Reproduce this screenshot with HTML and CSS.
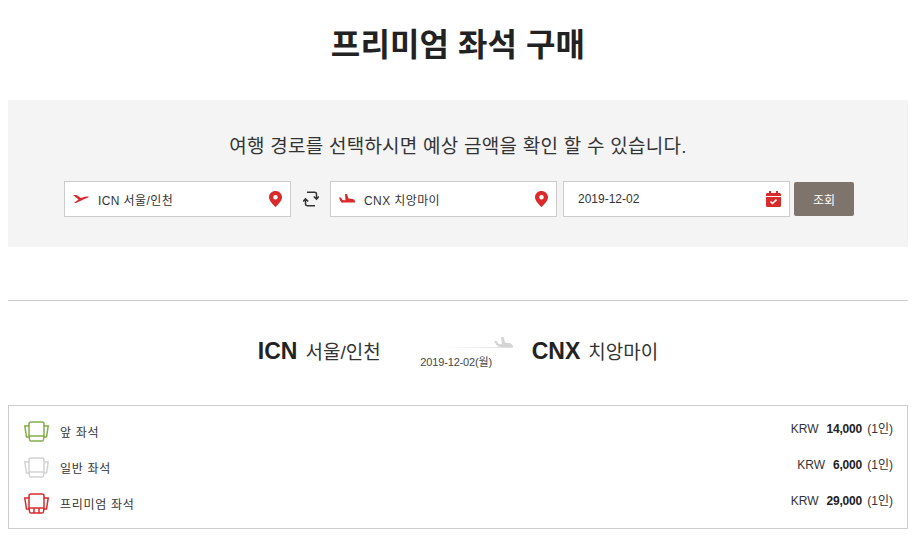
FILE: index.html
```html
<!DOCTYPE html>
<html lang="ko">
<head>
  <meta charset="UTF-8">
  <title>프리미엄 좌석 구매</title>
  <link rel="stylesheet" href="styles.css">
</head>
<body>

<h1 class="title">프리미엄 좌석 구매</h1>

<div class="search">
  <p class="search-text">여행 경로를 선택하시면 예상 금액을 확인 할 수 있습니다.</p>
  <div class="search-row">
    <div class="field">
      <svg class="plane" width="16" height="10" viewBox="0 0 16 10"><path fill="#d92b2b" d="M0 1h3.500L8 4l4-1.200c1.500-.4 3-.5 4-.2-1 1.400-3 2-5 2.700L3 9H1l4.500-3.500z"/></svg>
      <span class="field-text wide">ICN 서울/인천</span>
      <svg class="pin" width="13" height="16" viewBox="0 0 13 16"><path fill="#d92b2b" fill-rule="evenodd" d="M6.500 0C3 0 0 2.700 0 6.200 0 10 4.500 14 6.500 16 8.500 14 13 10 13 6.200 13 2.700 10 0 6.500 0zm0 4a2.300 2.300 0 1 1 0 4.600 2.300 2.300 0 0 1 0-4.600z"/></svg>
    </div>
    <div class="swap">
      <svg width="16" height="16" viewBox="0 0 16 16" fill="none" stroke="#333" stroke-width="1.500"><path d="M4 1.200h7.500c1.200 0 2 .8 2 2V8M10.800 5.500l2.700 2.700 2.300-2.700M12 14.800H4.500c-1.200 0-2-.8-2-2V8M.2 10.500l2.300-2.700 2.700 2.700"/></svg>
    </div>
    <div class="field">
      <svg class="plane" width="16" height="10" viewBox="0 0 16 10"><path fill="#d92b2b" d="M6 0h2l1.500 4.500 4 .5c1 .2 2 .8 2.500 2v1.500H4C2.500 9.500 1 7 0 3.500h2L3.500 6l3 .3z"/></svg>
      <span class="field-text wide">CNX 치앙마이</span>
      <svg class="pin" width="13" height="16" viewBox="0 0 13 16"><path fill="#d92b2b" fill-rule="evenodd" d="M6.500 0C3 0 0 2.700 0 6.200 0 10 4.500 14 6.500 16 8.500 14 13 10 13 6.200 13 2.700 10 0 6.500 0zm0 4a2.300 2.300 0 1 1 0 4.600 2.300 2.300 0 0 1 0-4.600z"/></svg>
    </div>
    <div class="field date">
      <span class="field-text">2019-12-02</span>
      <svg class="cal" width="15" height="16" viewBox="0 0 15 16"><path fill="#d92b2b" d="M3 0h2v2h5V0h2v2h1.500C14.400 2 15 2.600 15 3.500V5H0V3.500C0 2.600.6 2 1.500 2H3zM0 6h15v8.500c0 .9-.6 1.500-1.500 1.500h-12C.6 16 0 15.400 0 14.500z"/><path fill="none" stroke="#fff" stroke-width="1.600" d="M4.500 10.500l2 2 4-3.800"/></svg>
    </div>
    <button class="btn">조회</button>
  </div>
</div>

<hr class="line">

<div class="route">
  <div class="city"><b>ICN</b><span>서울/인천</span></div>
  <div class="route-date">
    <div class="route-line"></div>
    <svg class="route-plane" width="19" height="11" viewBox="0 0 19 11"><path fill="#d4d4d4" d="M7 0h2.500L11 5.500l4.500.5c1.200.2 2.500 1.200 3.500 3v1H6C4 10 1.500 7 0 4h2.500L4.500 7l3.500.2z"/></svg>
    <span class="date-text">2019-12-02(월)</span>
  </div>
  <div class="city"><b>CNX</b><span>치앙마이</span></div>
</div>

<div class="seats">
  <div class="seat-row">
    <svg class="seat" width="25" height="21" viewBox="0 0 25 21" fill="none" stroke="#85ad4a" stroke-width="1.500"><path d="M5 5V3c0-1.200.8-2 2-2h11c1.200 0 2 .8 2 2v2"/><path d="M5 5H.8l1.700 11H5zM20 5h4.200l-1.700 11H20zM5 5v10h15V5"/><path d="M5 15l.5 3.500c.1.900.7 1.500 1.500 1.500h11c.8 0 1.400-.6 1.500-1.500L20 15"/></svg>
    <span class="seat-name">앞 좌석</span>
    <span class="price">KRW <b>14,000</b> (1인)</span>
  </div>
  <div class="seat-row">
    <svg class="seat" width="25" height="21" viewBox="0 0 25 21" fill="none" stroke="#d2d2d2" stroke-width="1.500"><path d="M5 5V3c0-1.200.8-2 2-2h11c1.200 0 2 .8 2 2v2"/><path d="M5 5H.8l1.700 11H5zM20 5h4.200l-1.700 11H20zM5 5v10h15V5"/><path d="M5 15l.5 3.500c.1.900.7 1.500 1.500 1.500h11c.8 0 1.400-.6 1.500-1.500L20 15"/></svg>
    <span class="seat-name">일반 좌석</span>
    <span class="price">KRW <b>6,000</b> (1인)</span>
  </div>
  <div class="seat-row">
    <svg class="seat" width="25" height="21" viewBox="0 0 25 21" fill="none" stroke="#d92b2b" stroke-width="1.500"><path d="M5 5V3c0-1.200.8-2 2-2h11c1.200 0 2 .8 2 2v2"/><path d="M5 5H.8l1.700 11H5zM20 5h4.200l-1.700 11H20zM5 5v10h15V5"/><path d="M5 15l.5 3.500c.1.900.7 1.500 1.500 1.500h11c.8 0 1.400-.6 1.500-1.500L20 15M10 15v5M15 15v5"/></svg>
    <span class="seat-name">프리미엄 좌석</span>
    <span class="price">KRW <b>29,000</b> (1인)</span>
  </div>
</div>

</body>
</html>
```

FILE: styles.css
```css
body {
  margin: 0;
  padding: 0 9px 0 8px;
  font-family: "Liberation Sans", "Noto Sans CJK KR", sans-serif;
  color: #222;
  background-color: #fff;
}

.title {
  margin: 0;
  padding-top: 23px;
  height: 76px;
  box-sizing: border-box;
  text-align: center;
  font-size: 32px;
  letter-spacing: 0.1px;
  line-height: 44px;
  font-weight: bold;
  color: #222;
}

.search {
  height: 147px;
  margin-top: 24px;
  padding-top: 33px;
  box-sizing: border-box;
  background-color: #f4f4f4;
  text-align: center;
}

.search-text {
  margin: 0;
  font-size: 19px;
  letter-spacing: 0.25px;
  line-height: 28px;
  color: #333;
}

.search-row {
  display: flex;
  align-items: center;
  margin: 20px 0 0 56px;
}

.field {
  display: flex;
  align-items: center;
  width: 227px;
  height: 36px;
  box-sizing: border-box;
  padding: 0 8px;
  background-color: #fff;
  border: 1px solid #ccc;
}

.plane {
  margin-right: 9px;
}

.field-text {
  flex: 1;
  text-align: left;
  font-size: 12px;
  color: #333;
}

.wide {
  letter-spacing: 0.4px;
}

.date {
  margin-left: 6px;
  padding-left: 14px;
}

.swap {
  width: 39px;
  display: flex;
  justify-content: center;
}

.btn {
  width: 60px;
  height: 34px;
  margin-left: 4px;
  background-color: #7f746c;
  border: 0;
  border-radius: 2px;
  color: #fff;
  font-family: inherit;
  font-size: 12px;
}

.line {
  margin: 53px 0 0;
  border: 0;
  border-top: 1px solid #ccc;
}

.route {
  display: flex;
  justify-content: center;
  margin-top: 36px;
  height: 68px;
}

.city {
  font-size: 19px;
  line-height: 28px;
  color: #333;
}

.city b {
  font-size: 23px;
  color: #222;
  margin-right: 8px;
}

.route-date {
  width: 151px;
  position: relative;
  text-align: center;
  padding-top: 15px;
}

.route-line {
  position: absolute;
  top: 10px;
  left: 60px;
  width: 72px;
  height: 1px;
  background: linear-gradient(to right, #fff, #ddd);
}

.route-plane {
  position: absolute;
  top: 0;
  left: 113px;
}

.date-text {
  font-size: 11px;
  letter-spacing: -0.15px;
  color: #444;
}

.seats {
  border: 1px solid #ccc;
  padding: 7px 14px 7px 15px;
}

.seat-row {
  display: flex;
  align-items: center;
  height: 36px;
}

.seat-name {
  flex: 1;
  margin-left: 11px;
  font-size: 12px;
  letter-spacing: 0.7px;
  color: #333;
}

.price {
  margin-bottom: 8px;
  font-size: 12px;
  color: #333;
}

.price b {
  margin: 0 2px 0 4.5px;
  letter-spacing: -0.2px;
  color: #222;
}
```
